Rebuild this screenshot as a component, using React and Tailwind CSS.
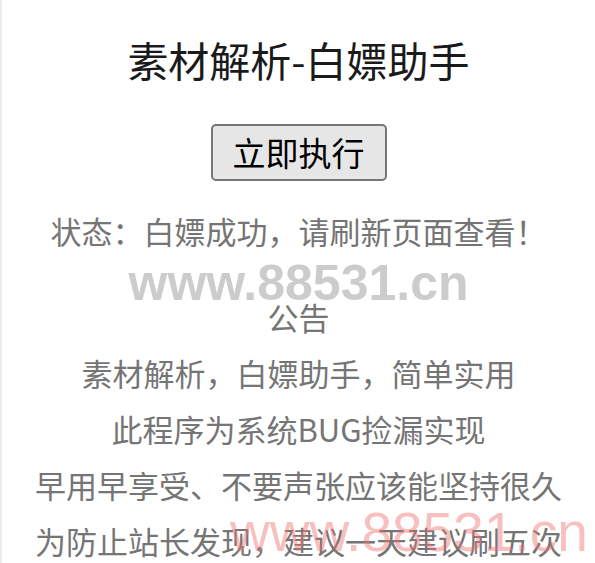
const App = () => {
  const notice = [
    "素材解析，白嫖助手，简单实用",
    "此程序为系统BUG捡漏实现",
    "早用早享受、不要声张应该能坚持很久",
    "为防止站长发现，建议一天建议刷五次",
  ];

  return (
    <div
      className="relative h-[563px] overflow-hidden bg-white border-l-2 border-[#ececec] text-center"
      style={{ fontFamily: '"Noto Sans CJK SC", "Noto Sans", sans-serif' }}
    >
      <div className="flex flex-col items-center pt-[34px]">
        {/* Title */}
        <h1 className="text-[41px] leading-[50px] text-[#1a1a1a]">素材解析-白嫖助手</h1>

        <button className="mt-[40px] w-[176px] h-[57px] rounded-[5px] border-2 border-[#767676] bg-[#e6e6e6] text-[33px] leading-none text-black">
          立即执行
        </button>

        <p className="mt-[22px] text-[31px] leading-[56px] text-[#757575]">状态：白嫖成功，请刷新页面查看！</p>

        {/* Notice */}
        <div className="mt-[30px] text-[31px] leading-[56px] text-[#757575] whitespace-nowrap">
          <p>公告</p>
          {notice.map((line) => (
            <p key={line}>{line}</p>
          ))}
        </div>
      </div>

      {/* Watermarks */}
      <div
        className="absolute left-0 right-0 top-[258px] text-[50px] leading-none font-bold text-[#cccccc] pointer-events-none"
        style={{ fontFamily: '"Liberation Sans", Arial, sans-serif' }}
      >
        www.88531.cn
      </div>
      <div
        className="absolute left-[228px] top-[505px] text-[55px] leading-none text-[#f07070]/45 whitespace-nowrap pointer-events-none"
        style={{ fontFamily: '"Liberation Sans", Arial, sans-serif' }}
      >
        www.88531.cn
      </div>
    </div>
  );
};

export default App;
